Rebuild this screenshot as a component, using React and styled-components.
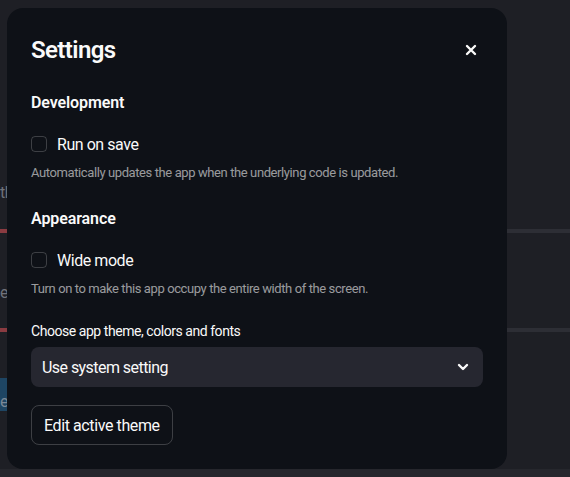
import React from 'react';
import styled, { createGlobalStyle } from 'styled-components';

const GlobalStyle = createGlobalStyle`
  html, body {
    margin: 0;
    padding: 0;
    background: #1e1f25;
    font-family: Roboto, "Noto Sans", sans-serif;
  }
`;

const AppBehind = styled.div`
  position: relative;
  height: 477px;
  overflow: hidden;
  display: flex;
  flex-direction: column;
`;

const BgMain = styled.main`
  flex: 1;
  display: flex;
  flex-direction: column;
  padding-top: 183px;
`;

const BgText = styled.p`
  margin: ${p => p.$top || 0}px 0 0;
  font-size: 16px;
  line-height: 20px;
  letter-spacing: -0.4px;
  color: #70727a;
`;

const BgTrack = styled.div`
  margin-top: ${p => p.$top}px;
  height: 4px;
  background: linear-gradient(to right, #8a3b41 0 20px, #2d2e35 20px);
`;

const BgButton = styled.div`
  margin-top: 46px;
  width: 80px;
  height: 33px;
  padding: 14px 0 0 0;
  box-sizing: border-box;
  background: #1e4563;
  color: #7a8896;
  font-size: 16px;
  letter-spacing: -0.4px;
`;

const BgFooter = styled.footer`
  height: 8px;
  background: #26272d;
`;

const Modal = styled.div`
  position: absolute;
  left: 7px;
  top: 8px;
  width: 500px;
  height: 461px;
  box-sizing: border-box;
  padding: 26px 24px 24px;
  background: #0e1117;
  border-radius: 16px;
  color: #fafafa;
  display: flex;
  flex-direction: column;
`;

const Header = styled.div`
  display: flex;
  align-items: center;
  justify-content: space-between;
  height: 32px;
`;

const Title = styled.h2`
  margin: 0;
  font-size: 24px;
  font-weight: 600;
  line-height: 32px;
  letter-spacing: -0.6px;
`;

const CloseButton = styled.button`
  width: 24px;
  height: 24px;
  display: flex;
  align-items: center;
  justify-content: center;
  padding: 0;
  border: none;
  background: transparent;
  color: #fafafa;
`;

const SectionTitle = styled.h3`
  margin: ${p => p.$top}px 0 0;
  font-size: 16px;
  font-weight: 600;
  line-height: 24px;
  letter-spacing: -0.1px;
`;

const CheckRow = styled.label`
  margin-top: 17px;
  display: flex;
  align-items: center;
  height: 24px;
  font-size: 16px;
  letter-spacing: -0.45px;
`;

const Box = styled.span`
  width: 16px;
  height: 16px;
  box-sizing: border-box;
  border: 1px solid rgba(250, 250, 250, 0.2);
  border-radius: 4px;
  margin-right: 10px;
`;

const Caption = styled.p`
  margin: 6px 0 0;
  font-size: 13px;
  line-height: 21px;
  letter-spacing: -0.4px;
  color: rgba(250, 250, 250, 0.6);
`;

const FieldLabel = styled.div`
  margin-top: 22px;
  font-size: 14px;
  line-height: 21px;
  letter-spacing: -0.45px;
`;

const Select = styled.div`
  margin-top: 5px;
  height: 40px;
  box-sizing: border-box;
  padding: 0 14px 0 11px;
  display: flex;
  align-items: center;
  justify-content: space-between;
  background: #262730;
  border-radius: 8px;
  font-size: 16px;
  letter-spacing: -0.55px;
`;

const ThemeButton = styled.button`
  margin-top: 18px;
  align-self: flex-start;
  height: 40px;
  padding: 0 12px;
  background: transparent;
  color: #fafafa;
  border: 1px solid rgba(250, 250, 250, 0.2);
  border-radius: 8px;
  font-family: inherit;
  font-size: 16px;
  letter-spacing: -0.4px;
`;

const Icon = styled.svg`
  display: block;
  fill: none;
  stroke: currentColor;
  stroke-width: 2.4;
  stroke-linecap: round;
  stroke-linejoin: round;
`;

export default function App() {
  return (
    <>
      <GlobalStyle />
      <AppBehind>
        <BgMain>
          <BgText>th</BgText>
          <BgTrack $top={26} />
          <BgText $top={50}>ea</BgText>
          <BgTrack $top={25} />
          <BgButton>ex</BgButton>
        </BgMain>
        <BgFooter />

        <Modal role="dialog">
          <Header>
            <Title>Settings</Title>
            <CloseButton aria-label="Close">
              <Icon width="12" height="12" viewBox="0 0 12 12">
                <path d="M2 2 L10 10 M10 2 L2 10" />
              </Icon>
            </CloseButton>
          </Header>

          <SectionTitle $top={25}>Development</SectionTitle>
          <CheckRow>
            <Box />
            Run on save
          </CheckRow>
          <Caption>Automatically updates the app when the underlying code is updated.</Caption>

          <SectionTitle $top={24}>Appearance</SectionTitle>
          <CheckRow>
            <Box />
            Wide mode
          </CheckRow>
          <Caption>Turn on to make this app occupy the entire width of the screen.</Caption>

          <FieldLabel>Choose app theme, colors and fonts</FieldLabel>
          <Select>
            Use system setting
            <Icon width="12" height="8" viewBox="0 0 12 8">
              <path d="M2 2 L6 6 L10 2" />
            </Icon>
          </Select>

          <ThemeButton>Edit active theme</ThemeButton>
        </Modal>
      </AppBehind>
    </>
  );
}
